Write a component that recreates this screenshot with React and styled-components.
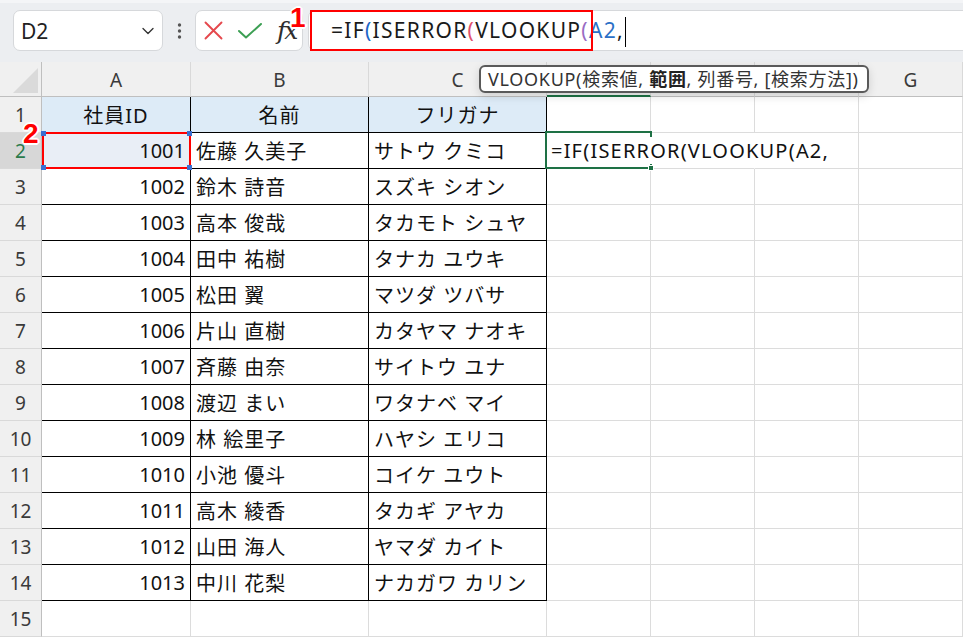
import React from "react";
import styled, { createGlobalStyle, css } from "styled-components";
import { ChevronDown } from "lucide-react";

const GlobalStyle = createGlobalStyle`
  html, body { margin: 0; padding: 0; background: #ffffff; }
  body { font-family: "Noto Sans", "Noto Sans CJK JP", sans-serif; }
  * { box-sizing: border-box; }
`;

const FONT = `"Noto Sans", "Noto Sans CJK JP", sans-serif`;

const Root = styled.div`
  position: relative;
  width: 963px;
  height: 638px;
  overflow: hidden;
  background: #ffffff;
  font-family: ${FONT};
`;

const FormulaBar = styled.div`
  display: flex;
  align-items: flex-start;
  height: 62px;
  padding: 10px 0 0 13px;
  background: #eceef1;
  border-top: 3px solid #f4f5f7;
`;

const NameBox = styled.div`
  width: 150px;
  height: 41px;
  margin-top: -3px;
  display: flex;
  align-items: center;
  justify-content: space-between;
  padding: 0 4px 0 7px;
  background: #ffffff;
  border: 1px solid #d6d8db;
  border-radius: 7px;
  font-size: 21px;
  color: #222;
`;

const DotsWrap = styled.div`
  width: 32px;
  height: 41px;
  margin-top: -3px;
  display: flex;
  align-items: center;
  justify-content: center;
`;

const FxBox = styled.div`
  width: 108px;
  height: 41px;
  margin-top: -3px;
  display: flex;
  align-items: center;
  gap: 15px;
  padding-left: 8px;
  background: #ffffff;
  border: 1px solid #d6d8db;
  border-radius: 7px;
`;

const FxLabel = styled.span`
  font-family: "DejaVu Serif", "Liberation Serif", serif;
  font-style: italic;
  font-weight: 500;
  font-size: 25px;
  color: #2e2e2e;
  letter-spacing: -2px;
  margin-left: 0;
  line-height: 1;
`;

const FormulaField = styled.div`
  position: relative;
  flex: 1;
  height: 41px;
  margin-top: -3px;
  margin-left: 5px;
  margin-right: -10px;
  padding-left: 22px;
  background: #ffffff;
  border: 1px solid #d6d8db;
  border-radius: 7px;
  font-size: 21px;
  line-height: 39px;
  letter-spacing: 1.3px;
  color: #1a1a1a;
  white-space: nowrap;
`;

const FormulaText = styled.span`
  position: relative;
  z-index: 1;
  background: #ffffff;
`;

const Tok = styled.span`
  color: ${(p) => p.$c || "inherit"};
`;

const Caret = styled.span`
  display: inline-block;
  width: 1.5px;
  height: 30px;
  margin-left: 1px;
  background: #000;
  vertical-align: middle;
`;

const Callout = styled.div`
  position: absolute;
  left: 1px;
  top: -1px;
  width: 283px;
  height: 41px;
  border: 2px solid #ff0000;
  z-index: 2;
`;

const Badge = styled.span`
  position: absolute;
  left: ${(p) => p.$x}px;
  top: ${(p) => p.$y}px;
  font-family: "Liberation Sans", Arial, sans-serif;
  font-weight: 700;
  font-size: 28px;
  line-height: 1;
  color: #ff0000;
  text-shadow: -1px -1px 0 #fff, 1px -1px 0 #fff, -1px 1px 0 #fff, 1px 1px 0 #fff,
    0 -2px 0 #fff, 0 2px 0 #fff, -2px 0 0 #fff, 2px 0 0 #fff;
  z-index: 10;
`;

const Sheet = styled.div`
  display: grid;
  grid-template-columns: 42px 149px 178px 178px 104px 104px 104px 104px;
  grid-template-rows: 35px repeat(15, 36px);
`;

const Corner = styled.div`
  background: #f0f0f0;
  border-right: 1px solid #bfbfbf;
  border-bottom: 1px solid #bfbfbf;
  display: flex;
  align-items: flex-end;
  justify-content: flex-end;
  padding: 0 3px 3px 0;
`;

const ColHeader = styled.div`
  display: flex;
  align-items: center;
  justify-content: center;
  background: #f0f0f0;
  border-right: 1px solid #d9d9d9;
  border-bottom: ${(p) => (p.$active ? "2px solid #1e7145" : "1px solid #bfbfbf")};
  font-size: 19px;
  color: #3a3a3a;
  padding-top: 1px;
`;

const RowHeader = styled.div`
  display: flex;
  align-items: center;
  justify-content: center;
  background: ${(p) => (p.$active ? "#d7d7d7" : "#f0f0f0")};
  border-right: 1px solid #bfbfbf;
  border-bottom: 1px solid #d9d9d9;
  font-size: 19px;
  color: ${(p) => (p.$active ? "#2b7a4b" : "#3a3a3a")};
`;

const Cell = styled.div`
  position: ${(p) => (p.$raised ? "relative" : "static")};
  z-index: ${(p) => (p.$raised ? 2 : "auto")};
  display: flex;
  align-items: center;
  justify-content: ${(p) =>
    p.$align === "right" ? "flex-end" : p.$align === "center" ? "center" : "flex-start"};
  padding: 0 5px 0 5px;
  background: ${(p) => p.$bg || "#ffffff"};
  border-right: ${(p) => (p.$noRight ? "1px solid transparent" : `1px solid ${p.$table ? "#000" : "#dcdcdc"}`)};
  border-bottom: 1px solid ${(p) => (p.$table ? "#000" : "#dcdcdc")};
  font-size: 20px;
  color: #111;
  white-space: nowrap;
  letter-spacing: ${(p) => (p.$tracking ? "1px" : "0")};
  ${(p) =>
    p.$overflow &&
    css`
      overflow: visible;
      padding-left: 4px;
      letter-spacing: 1.2px;
    `}
`;

const RefBox = styled.div`
  position: absolute;
  left: 0;
  top: -1px;
  right: -1px;
  bottom: -1px;
  border: 2px solid #ff0000;
`;

const Handle = styled.span`
  position: absolute;
  width: 5px;
  height: 5px;
  background: #3b6fd0;
  ${(p) => (p.$v === "t" ? "top: -3px;" : "bottom: -3px;")}
  ${(p) => (p.$h === "l" ? "left: -3px;" : "right: -3px;")}
`;

const ActiveBox = styled.div`
  position: absolute;
  left: -2px;
  top: -2px;
  right: -2px;
  bottom: -1px;
  border: 2px solid #1e7145;
  pointer-events: none;
`;

const FillHandle = styled.span`
  position: absolute;
  right: -4px;
  bottom: -4px;
  width: 6px;
  height: 6px;
  background: #1e7145;
  border: 1px solid #fff;
`;

const Tooltip = styled.div`
  position: absolute;
  left: 479px;
  top: 65px;
  width: 390px;
  height: 28px;
  padding: 0 0 0 7px;
  background: #ffffff;
  border: 2px solid #5a5a5a;
  border-radius: 6px;
  box-shadow: 0 3px 10px rgba(0, 0, 0, 0.14);
  font-size: 18px;
  line-height: 24px;
  letter-spacing: 0.7px;
  color: #333;
  white-space: nowrap;
  z-index: 8;
`;

const Strong = styled.b`
  font-weight: 700;
  color: #222;
`;

const COLS = ["A", "B", "C", "D", "E", "F", "G"];

const DATA = [
  ["1001", "佐藤 久美子", "サトウ クミコ"],
  ["1002", "鈴木 詩音", "スズキ シオン"],
  ["1003", "高本 俊哉", "タカモト シュヤ"],
  ["1004", "田中 祐樹", "タナカ ユウキ"],
  ["1005", "松田 翼", "マツダ ツバサ"],
  ["1006", "片山 直樹", "カタヤマ ナオキ"],
  ["1007", "斉藤 由奈", "サイトウ ユナ"],
  ["1008", "渡辺 まい", "ワタナベ マイ"],
  ["1009", "林 絵里子", "ハヤシ エリコ"],
  ["1010", "小池 優斗", "コイケ ユウト"],
  ["1011", "高木 綾香", "タカギ アヤカ"],
  ["1012", "山田 海人", "ヤマダ カイト"],
  ["1013", "中川 花梨", "ナカガワ カリン"],
];

const HEAD = ["社員ID", "名前", "フリガナ"];

function XIcon() {
  return (
    <svg width="19" height="19" viewBox="0 0 19 19">
      <path d="M1.5 1.5 L17.5 17.5 M17.5 1.5 L1.5 17.5" stroke="#e5484d" strokeWidth="1.9" strokeLinecap="round" />
    </svg>
  );
}

function CheckIcon() {
  return (
    <svg width="24" height="16" viewBox="0 0 24 16">
      <path d="M1 8 L8 14.5 L23 1" fill="none" stroke="#3c9f53" strokeWidth="2" strokeLinecap="round" strokeLinejoin="round" />
    </svg>
  );
}

function Dots() {
  return (
    <svg width="5" height="16" viewBox="0 0 5 16">
      <circle cx="2.5" cy="2" r="1.7" fill="#555" />
      <circle cx="2.5" cy="8" r="1.7" fill="#555" />
      <circle cx="2.5" cy="14" r="1.7" fill="#555" />
    </svg>
  );
}

function CornerTriangle() {
  return (
    <svg width="25" height="25" viewBox="0 0 25 25">
      <polygon points="25,0 25,25 0,25" fill="#dadada" />
    </svg>
  );
}

function Formula({ colored, caret }) {
  const c = (v) => (colored ? v : undefined);
  return (
    <FormulaText>
      <Tok>=IF</Tok>
      <Tok $c={c("#2066c8")}>(</Tok>
      <Tok>ISERROR</Tok>
      <Tok $c={c("#e0506e")}>(</Tok>
      <Tok>VLOOKUP</Tok>
      <Tok $c={c("#9a6cc4")}>(</Tok>
      <Tok $c={c("#2b6fc6")}>A2</Tok>
      <Tok>,</Tok>
      {caret && <Caret />}
    </FormulaText>
  );
}

function renderCell(r, c) {
  const key = `${r}-${c}`;
  const inTable = r <= 14 && c <= 2;
  if (r === 1 && c <= 2) {
    return (
      <Cell key={key} $table $bg="#ddebf7" $align="center" $tracking>
        {HEAD[c]}
      </Cell>
    );
  }
  if (inTable) {
    const row = DATA[r - 2];
    if (c === 0) {
      const isRef = r === 2;
      return (
        <Cell key={key} $table $align="right" $bg={isRef ? "#e9eef6" : "#fff"} $raised={isRef}>
          {row[0]}
          {isRef && (
            <RefBox>
              <Handle $v="t" $h="l" />
              <Handle $v="t" $h="r" />
              <Handle $v="b" $h="l" />
              <Handle $v="b" $h="r" />
            </RefBox>
          )}
        </Cell>
      );
    }
    return (
      <Cell key={key} $table $tracking>
        {row[c]}
      </Cell>
    );
  }
  if (r === 2 && c === 3) {
    return (
      <Cell key={key} $raised $overflow $noRight>
        <ActiveBox>
          <FillHandle />
        </ActiveBox>
        <Formula />
      </Cell>
    );
  }
  if (r === 2 && c === 4) {
    return <Cell key={key} $noRight $bg="transparent" />;
  }
  return <Cell key={key} />;
}

export default function App() {
  const rows = [];
  for (let r = 1; r <= 15; r++) {
    rows.push(
      <RowHeader key={`rh-${r}`} $active={r === 2}>
        {r}
      </RowHeader>
    );
    for (let c = 0; c < 7; c++) rows.push(renderCell(r, c));
  }

  return (
    <Root>
      <GlobalStyle />
      <FormulaBar>
        <NameBox>
          <span>D2</span>
          <ChevronDown size={20} strokeWidth={1.6} color="#333" />
        </NameBox>
        <DotsWrap>
          <Dots />
        </DotsWrap>
        <FxBox>
          <XIcon />
          <CheckIcon />
          <FxLabel>fx</FxLabel>
        </FxBox>
        <FormulaField>
          <Formula colored caret />
          <Callout />
        </FormulaField>
      </FormulaBar>

      <Sheet>
        <Corner>
          <CornerTriangle />
        </Corner>
        {COLS.map((col) => (
          <ColHeader key={col} $active={col === "D"}>
            {col}
          </ColHeader>
        ))}
        {rows}
      </Sheet>

      <Tooltip>
        VLOOKUP(検索値, <Strong>範囲</Strong>, 列番号, [検索方法])
      </Tooltip>

      <Badge $x={290} $y={4}>1</Badge>
      <Badge $x={23} $y={120}>2</Badge>
    </Root>
  );
}
